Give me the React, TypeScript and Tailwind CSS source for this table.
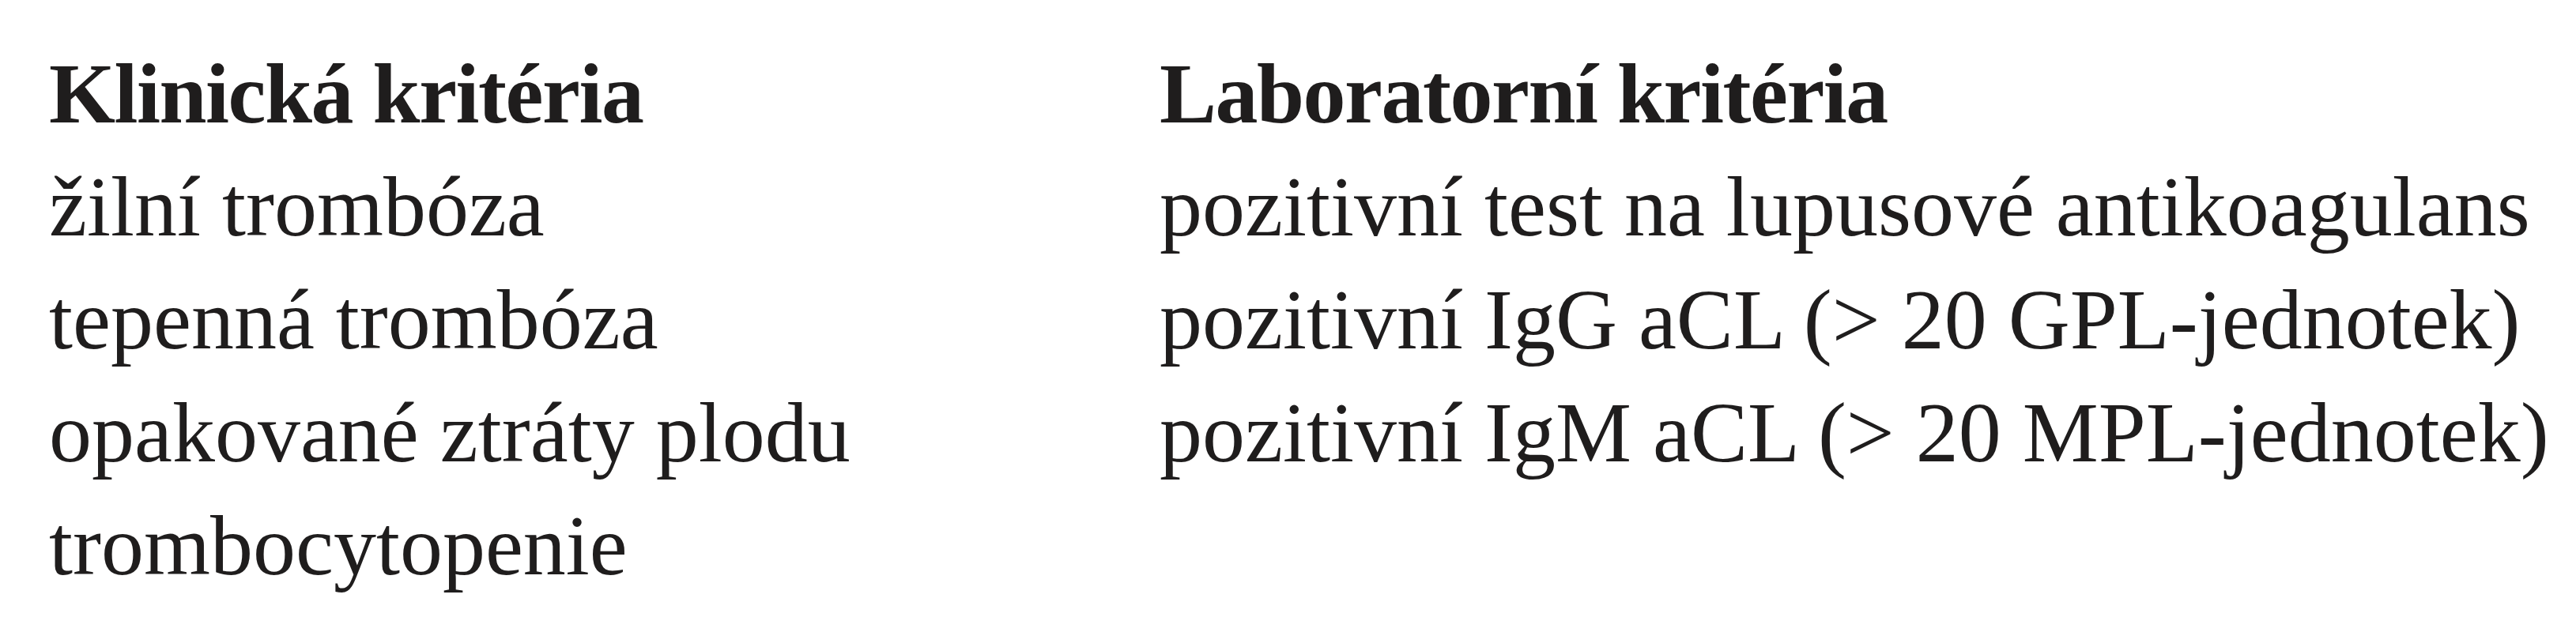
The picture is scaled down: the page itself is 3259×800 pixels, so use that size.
const clinical = ["žilní trombóza", "tepenná trombóza", "opakované ztráty plodu", "trombocytopenie"];

const laboratory = [
  "pozitivní test na lupusové antikoagulans",
  "pozitivní IgG aCL (> 20 GPL-jednotek)",
  "pozitivní IgM aCL (> 20 MPL-jednotek)",
];

const Column = ({ title, items, width }: { title: string; items: string[]; width: string }) => (
  <div className={`flex flex-col ${width}`}>
    <div className="font-bold tracking-[-1.5px] whitespace-nowrap">{title}</div>
    {items.map((item) => (
      <div key={item} className="whitespace-nowrap">
        {item}
      </div>
    ))}
  </div>
);

export default function App() {
  return (
    <div
      className="h-[800px] w-full bg-white pt-[47px] pl-[62px] text-[108px] leading-[143px] text-[#1f1d1d]"
      style={{ fontFamily: "'Liberation Serif', 'Times New Roman', serif" }}
    >
      <div className="flex">
        <Column title="Klinická kritéria" items={clinical} width="w-[1405px]" />
        <Column title="Laboratorní kritéria" items={laboratory} width="w-auto" />
      </div>
    </div>
  );
}
